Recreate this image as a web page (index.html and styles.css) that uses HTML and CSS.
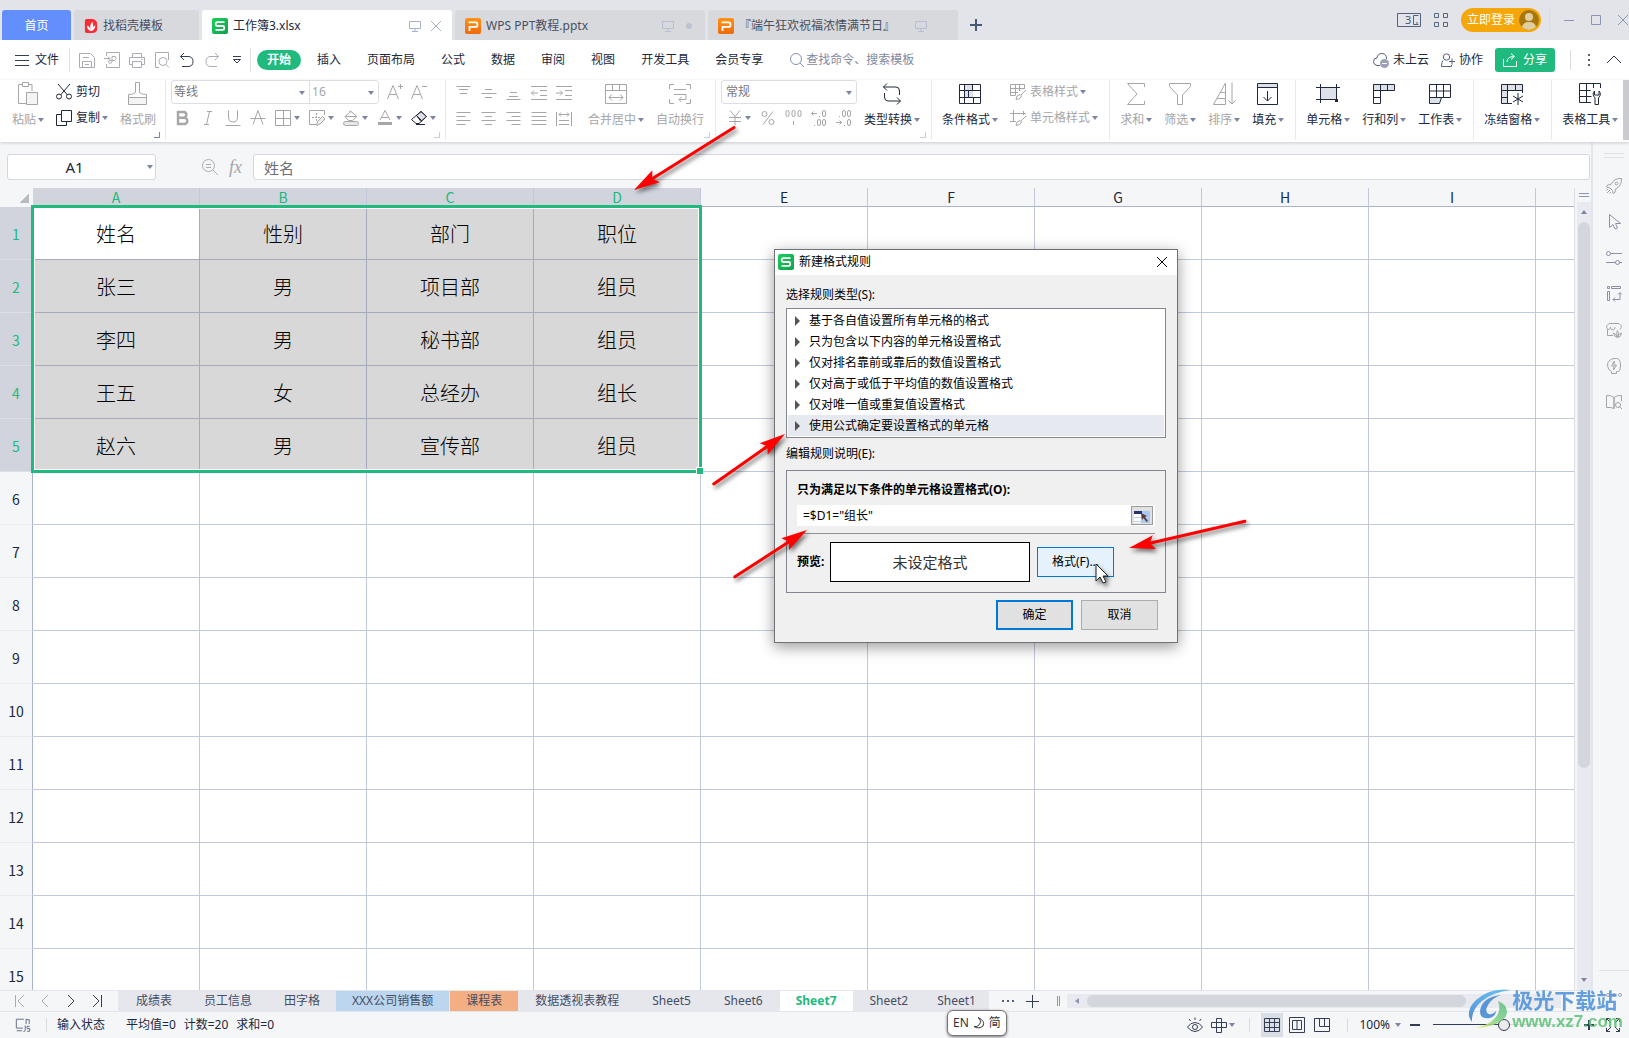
FILE: index.html
```html
<!DOCTYPE html>
<html lang="zh-CN">
<head>
<meta charset="utf-8">
<title>工作簿3.xlsx - WPS 表格</title>
<link rel="stylesheet" href="styles.css">
</head>
<body>
<svg class="defs" aria-hidden="true">
  <defs>
    <linearGradient id="green" x1="0" y1="0" x2="1" y2="1"><stop offset="0" stop-color="#19d05c"/><stop offset="1" stop-color="#12a04c"/></linearGradient>
    <linearGradient id="orange" x1="0" y1="0" x2="0" y2="1"><stop offset="0" stop-color="#ff9318"/><stop offset="1" stop-color="#ee6a0c"/></linearGradient>
    <linearGradient id="swoosh" x1="0" y1="0" x2="0" y2="1"><stop offset="0" stop-color="#4fb3ee"/><stop offset="1" stop-color="#3a77c8"/></linearGradient>
    <linearGradient id="leaf" x1="1" y1="0" x2="0" y2="1"><stop offset="0" stop-color="#55bf7c"/><stop offset=".5" stop-color="#7fd08a"/><stop offset="1" stop-color="#e8ee5a"/></linearGradient>
  </defs>
  <symbol id="i-s" viewBox="0 0 16 16"><rect width="16" height="16" rx="2" fill="url(#green)"/><path d="M12.5 4.2H5.2Q3.8 4.2 3.8 5.6V6.6Q3.8 8 5.2 8H10.8Q12.2 8 12.2 9.4V10.4Q12.2 11.8 10.8 11.8H3.5" fill="none" stroke="#fff" stroke-width="1.8"/></symbol>
  <symbol id="i-p" viewBox="0 0 16 16"><rect width="16" height="16" rx="2" fill="url(#orange)"/><path d="M3.5 4.3H10.8Q12.4 4.3 12.4 5.9V7.2Q12.4 8.9 10.8 8.9H4.5V13" fill="none" stroke="#fff" stroke-width="1.8"/></symbol>
  <symbol id="i-monitor" viewBox="0 0 12 12"><path d="M.5 1.5h11v7H.5zM6 8.500v3M3 11.500h6"/></symbol>
  <symbol id="arrow" overflow="visible"><path d="M0 0L26 -7L22 -1V1L26 7Z" fill="#f00" stroke="none"/></symbol>
</svg>

<div class="app">
  <header class="titlebar">
    <nav class="doc-tabs">
      <button class="doc-tab home">首页</button>
      <button class="doc-tab docer"><svg class="i14" viewBox="0 0 14 16"><path d="M2 0h7q5 1 5 6v5q0 5-6 5H2q-2 0-2-2V2Q0 0 2 0z" fill="#fa2b35"/><path d="M7 14Q2 12 2.500 7.500Q6 9 7 14ZM7 14Q4.500 7 8.500 3Q11 8 7 14ZM7 14Q8 9 12 7Q12 12 7 14Z" fill="#fff"/></svg><span>找稻壳模板</span></button>
      <button class="doc-tab wide active"><svg class="i16"><use href="#i-s"/></svg><span class="grow">工作簿3.xlsx</span><svg class="i12 ln soft"><use href="#i-monitor"/></svg><svg class="i12 ln soft" viewBox="0 0 12 12"><path d="M1 1l10 10M11 1L1 11"/></svg></button>
      <button class="doc-tab wide"><svg class="i16"><use href="#i-p"/></svg><span class="grow">WPS PPT教程.pptx</span><svg class="i12 ln pale"><use href="#i-monitor"/></svg><svg class="i12" viewBox="0 0 12 12"><circle cx="6" cy="6" r="3" fill="#bcc2d4"/></svg></button>
      <button class="doc-tab wide"><svg class="i16"><use href="#i-p"/></svg><span class="grow">『端午狂欢祝福浓情满节日』</span><svg class="i12 ln pale"><use href="#i-monitor"/></svg><svg class="i12"></svg></button>
      <button class="new-tab" aria-label="新建"><svg class="i12" viewBox="0 0 12 12"><path d="M6 0v12M0 6h12" stroke="#4a5878" stroke-width="2"/></svg></button>
    </nav>
    <div class="window-tools">
      <svg class="w24" viewBox="0 0 24 16"><path d="M.5 1.500h23v13H.5zM21.500 3.500h-5v9h5M19 11h2" fill="none" stroke="#56627e"/><text x="8" y="12" font-size="11" fill="#48536e">3</text></svg>
      <svg class="i14 ln slate" viewBox="0 0 14 14"><path d="M.5.5h4v4h-4zM9.500.5h4v4h-4zM.5 9.500h4v4h-4zM9.500 9.500h4v4h-4z"/></svg>
      <button class="login">立即登录<svg class="i20" viewBox="0 0 20 20"><circle cx="10" cy="10" r="10" fill="#a8760b"/><circle cx="10" cy="7" r="4" fill="#e0cda0"/><path d="M3 17q1-5 7-5t7 5q-3 3-7 3t-7-3z" fill="#e0cda0"/></svg></button>
      <i class="vline"></i>
      <svg class="i12 ln win" viewBox="0 0 12 12"><path d="M1 6.500h10"/></svg>
      <svg class="i12 ln win" viewBox="0 0 12 12"><path d="M1.500 1.500h9v9h-9z"/></svg>
      <svg class="i12 ln win" viewBox="0 0 12 12"><path d="M1 1l10 10M11 1L1 11"/></svg>
    </div>
  </header>

  <div class="menubar">
    <button class="file"><svg class="i14 ln dark" viewBox="0 0 14 14"><path d="M0 2.500h14M0 7.500h14M0 12.500h14"/></svg>文件</button>
    <div class="quick">
      <svg class="i16 ln gray" viewBox="0 0 16 16"><path d="M.5 1.500h11l4 4v10H.5zM3.500 15.500v-6h9v6M4 5.500h6M6 12.500h4"/></svg>
      <svg class="i16 ln gray" viewBox="0 0 16 16"><path d="M2.500 4V.5h13v15h-13V12M0 6.500h6M4 4.500l2 2-2 2M8 10V4.500h3.500q1.500 2-.5 4H7q-3 0-2.500 2t3.500 0"/></svg>
      <svg class="i16 ln gray" viewBox="0 0 16 16"><path d="M3.500 5V1.500h9V5M3.500 12.500h-3v-7h15v7h-3M3.500 9.500h9v6h-9zM12 7.500h1.500"/></svg>
      <svg class="i16 ln gray" viewBox="0 0 16 16"><path d="M5 15.500H1.500V.5h13V8M12 12.500l3 3"/><circle cx="9" cy="9.500" r="4"/></svg>
      <svg class="i16 ln dark" viewBox="0 0 16 16"><path d="M5 1L1.500 4.500 5 8M1.500 4.500H9q5 0 5 5t-5 5H3"/></svg>
      <svg class="i16 ln gray" viewBox="0 0 16 16"><path d="M11 1l3.500 3.500L11 8M14.500 4.500H7q-5 0-5 5t5 5h6"/></svg>
      <svg class="i10 ln dark" viewBox="0 0 10 10"><path d="M1 1.500h8M1.500 4.500h7L5 8z"/></svg>
    </div>
    <nav class="menus">
      <button class="menu current">开始</button><button class="menu">插入</button><button class="menu">页面布局</button><button class="menu">公式</button><button class="menu">数据</button><button class="menu">审阅</button><button class="menu">视图</button><button class="menu">开发工具</button><button class="menu">会员专享</button>
    </nav>
    <label class="search"><svg class="i14 ln find" viewBox="0 0 14 14"><circle cx="6" cy="6" r="5.500"/><path d="M10 10l4 4"/></svg><input type="text" placeholder="查找命令、搜索模板" aria-label="查找命令"></label>
    <div class="account">
      <button><svg class="i16 ln slate" viewBox="0 0 16 16"><path d="M7 13.500H4Q.5 13 .5 9.500T4 6q.5-4.500 5-4.500T13.500 7"/><circle cx="11.500" cy="11.500" r="4.500" fill="#9ba2b5" stroke="none"/><path d="M9 11.500h5" stroke="#fff"/></svg>未上云</button>
      <button><svg class="i14 ln slate" viewBox="0 0 14 14"><circle cx="5.500" cy="4" r="3.200"/><path d="M2 7.500Q.5 9 .5 13.500h10V12M8 8.500h6M11 5.500v6"/></svg>协作</button>
      <button class="share"><svg class="i14 ln white" viewBox="0 0 14 14"><path d="M.5 6v7.500h13V8M4 9q0-5.500 7-5.500M8 .5l3.500 3L8 6.500"/></svg>分享</button>
      <i class="vline"></i>
      <svg class="i12" viewBox="0 0 12 12"><path d="M5 0h2v2H5zM5 5h2v2H5zM5 10h2v2H5z" fill="#5a6478"/></svg>
      <svg class="i14 ln dark" viewBox="0 0 14 14"><path d="M0 10l7-7 7 7"/></svg>
    </div>
  </div>

  <div class="ribbon">
    <section class="group corner dark-corner">
      <button class="big off"><svg class="i24 ln" viewBox="0 0 24 24"><path d="M6 2.500H2.500v19H10M16 9V2.500h-4M6.500.5h6v4h-6z"/><path d="M10.500 10.500h11v12h-11z" fill="#f4f4f5"/></svg><span class="dd">粘贴</span></button>
      <div class="stack">
        <button class="small"><svg class="i16 ln" viewBox="0 0 16 16"><path d="M2 0l9.500 11M14 0L4.500 11"/><circle cx="3" cy="12.500" r="2.500"/><circle cx="13" cy="12.500" r="2.500"/></svg>剪切</button>
        <button class="small"><svg class="i16 ln" viewBox="0 0 16 16"><path d="M5.500.5h10v11h-10zM5 4.500H.5v11h10V12"/></svg><span class="dd">复制</span></button>
      </div>
      <button class="big off"><svg class="i24 ln" viewBox="0 0 24 24"><path d="M9.500 10V.5h4V10q0 2 7 2.500v3h-18v-3Q9.500 12 9.500 10z"/><path d="M2.500 15.500h18v7h-18z" fill="#f4f4f5"/></svg><span>格式刷</span></button>
    </section>

    <section class="group font corner">
      <div class="stack">
        <div class="line">
          <span class="pick name"><select aria-label="字体"><option>等线</option></select></span><span class="pick size"><select aria-label="字号"><option>16</option></select></span>
          <svg class="i16 ln off step" viewBox="0 0 16 16"><path d="M.5 15L6 1.500 11.500 15M2.500 10.500h7M11 2.500h5M13.500 0v5"/></svg>
          <svg class="i16 ln off step" viewBox="0 0 16 16"><path d="M.5 15L6 1.500 11.500 15M2.500 10.500h7M11 2.500h5"/></svg>
        </div>
        <div class="line marks off">
          <svg class="i16 ln" viewBox="0 0 16 16"><path d="M3 2h5.500a2.800 2.800 0 010 5.700H3zM3 7.700h6.200a3.100 3.100 0 010 6.300H3z" stroke-width="2.400"/></svg>
          <svg class="i16 ln" viewBox="0 0 16 16"><path d="M7 1.500h5M4 14.500h5M9.500 1.500l-3 13"/></svg>
          <svg class="i16 ln" viewBox="0 0 16 16"><path d="M3.500.5V7q0 5 4.500 5t4.500-5V.5M.5 15.500h15"/></svg>
          <svg class="i16 ln" viewBox="0 0 16 16"><path d="M3 14.500L8 .5l5 14M.5 8.500h15"/></svg>
          <span class="dd"><svg class="i16 ln" viewBox="0 0 16 16"><path d="M.5.5h15v15H.5zM8.500.5v15M.5 8.500h15"/></svg></span>
          <span class="dd"><svg class="i16 ln" viewBox="0 0 16 16"><path d="M7 14.500H.5V.5h15V5"/><path d="M3 7.500h8M7.500 3v8" stroke-dasharray="2 1"/><path d="M7.500 15.500l1-4 5-5 2.500 2.500-5 5z" fill="#eee"/></svg></span>
          <span class="dd"><svg class="i16 ln" viewBox="0 0 16 16"><path d="M2 6.500l6-5 6 5-4.500 4H5.500zM6 1l2 .5M2.500 6.500h11"/><rect x=".5" y="11.500" width="15" height="4" rx="2" fill="#e8e8ea"/></svg></span>
          <span class="dd"><svg class="i16 ln" viewBox="0 0 16 16"><path d="M3 10L8 .5 13 10M4.500 7.500h7"/><path d="M1 13.500h14" stroke-width="3"/></svg></span>
          <span class="dd ink"><svg class="i16 ln" viewBox="0 0 16 16"><path d="M5.500 5.500L10 1.500l5.500 5-5.500 5z" fill="#dfe1e8"/><path d="M10 1.500l5.500 5-7.500 7H5L.5 9.500zM5.500 5.500l5 5M5 14.500h9"/></svg></span>
        </div>
      </div>
    </section>

    <section class="group align corner off">
      <div class="grid5">
        <svg class="i16 ln" viewBox="0 0 16 16"><path d="M.5 1.500h14M3 4.500h9M4 8.500h7"/></svg>
        <svg class="i16 ln" viewBox="0 0 16 16"><path d="M4 4.500h7M.5 8.500h15M4 12.500h7"/></svg>
        <svg class="i16 ln" viewBox="0 0 16 16"><path d="M4 7.500h7M3 11.500h9M.5 14.500h14"/></svg>
        <svg class="i16 ln" viewBox="0 0 16 16"><path d="M0 1.500h16M9 5.500h7M9 10.500h7M0 14.500h16M7 8H.5M3 5.500L.5 8 3 10.500"/></svg>
        <svg class="i16 ln" viewBox="0 0 16 16"><path d="M0 1.500h16M9 5.500h7M9 10.500h7M0 14.500h16M0 8h6.500M4 5.500L6.500 8 4 10.500"/></svg>
        <svg class="i16 ln" viewBox="0 0 16 16"><path d="M.5 1.500h14M.5 5.500h9M.5 9.500h14M.5 13.500h9"/></svg>
        <svg class="i16 ln" viewBox="0 0 16 16"><path d="M.5 1.500h14M4 5.500h7M.5 9.500h14M4 13.500h7"/></svg>
        <svg class="i16 ln" viewBox="0 0 16 16"><path d="M.5 1.500h14M5.500 5.500h9M.5 9.500h14M5.500 13.500h9"/></svg>
        <svg class="i16 ln" viewBox="0 0 16 16"><path d="M.5 1.500h15M.5 5.500h15M.5 9.500h15M.5 13.500h15"/></svg>
        <svg class="i16 ln" viewBox="0 0 16 16"><path d="M.5 1v14M15.500 1v14M3 3.500h10M5 1.500l-2 2 2 2M11 1.500l2 2-2 2M3 9.500h10M3 13.500h10"/></svg>
      </div>
      <button class="big"><svg class="i24 ln" viewBox="0 0 24 24"><path d="M1.500 2.500h21v19h-21zM1.500 8.500h21M8.500 2.500v6M15.500 2.500v6M5 15.500h14M8 12.500l-3 3 3 3M16 12.500l3 3-3 3"/></svg><span class="dd">合并居中</span></button>
      <button class="big"><svg class="i24 ln" viewBox="0 0 24 24"><path d="M6 2.500H1.500V7M18 2.500h4.500V7M6 21.500H1.500V17M18 21.500h4.500V17M6 7.500h12M6 12.500h12v5h-7M13.500 15l-2.500 2.500 2.500 2.500"/></svg><span>自动换行</span></button>
    </section>

    <section class="group number corner">
      <div class="stack off">
        <div class="line"><span class="pick format"><select aria-label="数字格式"><option>常规</option></select></span></div>
        <div class="line formats">
          <span class="dd"><svg class="i16 ln" viewBox="0 0 16 16"><path d="M3 .5l5 6 5-6M8 6.500v9M2 7.500h12M2 11.500h12"/></svg></span>
          <svg class="i16 ln" viewBox="0 0 16 16"><circle cx="4.500" cy="4" r="2.500"/><circle cx="11.500" cy="12" r="2.500"/><path d="M13 1.500l-10 13"/></svg>
          <svg class="i18 ln" viewBox="0 0 18 16"><rect x="1" y=".5" width="3" height="6" rx="1.500"/><rect x="7" y=".5" width="3" height="6" rx="1.500"/><rect x="13" y=".5" width="3" height="6" rx="1.500"/><path d="M8.500 11v4"/></svg>
          <svg class="i16 ln" viewBox="0 0 16 16"><rect x="11.500" y=".5" width="3" height="6" rx="1.500"/><rect x="6.500" y="9.500" width="3" height="6" rx="1.500"/><rect x="11.500" y="9.500" width="3" height="6" rx="1.500"/><path d="M6 3.500H.5M2.500 1.500l-2 2 2 2M8 6.500h1M3 15.500h1"/></svg>
          <svg class="i16 ln" viewBox="0 0 16 16"><rect x="6.500" y=".5" width="3" height="6" rx="1.500"/><rect x="11.500" y=".5" width="3" height="6" rx="1.500"/><rect x="11.500" y="9.500" width="3" height="6" rx="1.500"/><path d="M0 12.500h5.500M3.500 10.500l2 2-2 2M3 6.500h1M8 15.500h1"/></svg>
        </div>
      </div>
      <button class="big"><svg class="i24 ln" viewBox="0 0 24 24"><path d="M7 1.500L3.500 5 7 8.500M3.500 5H16q3.500 0 3.500 4v4M17 15.500l3.500 3.500-3.500 3.500M20.500 19H8q-3.500 0-3.500-4v-4"/></svg><span class="dd">类型转换</span></button>
    </section>

    <section class="group">
      <button class="big"><svg class="i24 ln" viewBox="0 0 24 24"><path d="M7 2.500h8v13H7z" fill="#dfe1e8" stroke="none"/><path d="M1.500 2.500h21v19h-21zM1.500 8.500h21M1.500 15.500h21M6.500 2.500v19M14.500 2.500v6M10.500 8.500v7M15.500 15.500v6"/></svg><span class="dd">条件格式</span></button>
      <div class="stack off">
        <button class="small"><svg class="i16 ln" viewBox="0 0 16 16"><path d="M14.500 5V.5H.5v11H5M.5 4.500h14M.5 8.500H8M5.500.5v11M9.500.5V7"/><path d="M16 6l-5 5M6 15.500q0-4.500 4-5l1.500 1.500q-1 3.500-5.500 3.500z"/></svg><span class="dd">表格样式</span></button>
        <button class="small"><svg class="i16 ln" viewBox="0 0 16 16"><path d="M0 3.500h16M3.500 0v12M0 11.500h6M13.500 1v4"/><path d="M16 6l-5 5M6 15.500q0-4.500 4-5l1.500 1.500q-1 3.500-5.500 3.500z"/></svg><span class="dd">单元格样式</span></button>
      </div>
    </section>

    <section class="group">
      <button class="big off"><svg class="i24 ln" viewBox="0 0 24 24"><path d="M20.500 5V1.500h-17L13 12 3.500 22.500h17V19"/></svg><span class="dd">求和</span></button>
      <button class="big off"><svg class="i24 ln" viewBox="0 0 24 24"><path d="M1.500 1.500h21v3L14.500 13v9.500h-5V13l-8-8.500z"/></svg><span class="dd">筛选</span></button>
      <button class="big off"><svg class="i24 ln" viewBox="0 0 24 24"><path d="M1.500 22.500L13.500 1v21.500zM8 10.500h5.500M5 16.500h8.500M20 .5V22M16.500 18.500L20 22l3.500-3.500"/></svg><span class="dd">排序</span></button>
      <button class="big"><svg class="i24 ln" viewBox="0 0 24 24"><path d="M1.500 1.500h20v4h-20z" fill="#dfe1e8"/><path d="M1.500 5.500h20v17h-20zM11.500 9v10M7.500 15l4 4 4-4"/></svg><span class="dd">填充</span></button>
    </section>

    <section class="group">
      <button class="big"><svg class="i24 ln" viewBox="0 0 24 24"><path d="M4.500 5.500h16v12h-16z" fill="#dfe1e8"/><path d="M0 5.500h24M0 17.500h18M4.500 2v19M20.500 2v12"/><path d="M19 17h3v3h-3z" fill="#20283c" stroke="none"/></svg><span class="dd">单元格</span></button>
      <button class="big"><svg class="i24 ln" viewBox="0 0 24 24"><path d="M1.500 2.500h21v6h-21z" fill="#dfe1e8"/><path d="M8.500 2.500v19h-7V2.500M15.500 2.500v6M1.500 15.500h7"/></svg><span class="dd">行和列</span></button>
      <button class="big"><svg class="i24 ln" viewBox="0 0 24 24"><path d="M1.500 15.500h12l-2 6h-10z" fill="#dfe1e8"/><path d="M1.500 2.500h21v13h-21zM1.500 9h21M8.500 2.500v13M15.500 2.500v13"/></svg><span class="dd">工作表</span></button>
    </section>

    <section class="group">
      <button class="big"><svg class="i24 ln" viewBox="0 0 24 24"><path d="M1.500 2.500h21v6h-21zM1.500 8.500h6v13h-6z" fill="#dfe1e8"/><path d="M1.500 8.500h21V11M7.500 2.500v19H12M15.500 2.500v6M1.500 15.500h6M18 11v12M13 14l10 6M23 14l-10 6"/></svg><span class="dd">冻结窗格</span></button>
    </section>

    <section class="group last">
      <button class="big"><svg class="i24 ln" viewBox="0 0 24 24"><path d="M13 20.500H1.500v-19h21V6M1.500 8.500h11M1.500 14.500h12M8.500 1.500v19M15.500 1.500V6M16.500 9q-3 3 .5 7v6.500h3.500V16q3.500-4 .5-7v4h-4.500z"/></svg><span class="dd">表格工具</span></button>
    </section>
    <button class="more" aria-label="更多"></button>
  </div>

  <main class="workspace">
    <div class="center">
      <div class="formula-bar">
        <label class="name-box"><input type="text" value="A1" aria-label="名称框"></label>
        <svg class="i16 ln gray" viewBox="0 0 16 16"><circle cx="6.500" cy="6.500" r="6"/><path d="M11 11l5 5M4 5.500h5M4 8.500h5"/></svg>
        <span class="fx">fx</span>
        <input class="formula" type="text" value="姓名" aria-label="编辑栏">
      </div>

      <div class="sheet-area">
        <div class="sheet">
          <table>
            <colgroup><col class="c-num"><col span="10" class="c-col"></colgroup>
            <thead><tr><th class="all"></th><th class="sel">A</th><th class="sel">B</th><th class="sel">C</th><th class="sel">D</th><th>E</th><th>F</th><th>G</th><th>H</th><th>I</th><th></th></tr></thead>
            <tbody>
              <tr class="data"><th>1</th><td class="cur">姓名</td><td>性别</td><td>部门</td><td>职位</td><td></td><td></td><td></td><td></td><td></td><td></td></tr>
              <tr class="data"><th>2</th><td>张三</td><td>男</td><td>项目部</td><td>组员</td><td></td><td></td><td></td><td></td><td></td><td></td></tr>
              <tr class="data"><th>3</th><td>李四</td><td>男</td><td>秘书部</td><td>组员</td><td></td><td></td><td></td><td></td><td></td><td></td></tr>
              <tr class="data"><th>4</th><td>王五</td><td>女</td><td>总经办</td><td>组长</td><td></td><td></td><td></td><td></td><td></td><td></td></tr>
              <tr class="data"><th>5</th><td>赵六</td><td>男</td><td>宣传部</td><td>组员</td><td></td><td></td><td></td><td></td><td></td><td></td></tr>
              <tr><th>6</th><td></td><td></td><td></td><td></td><td></td><td></td><td></td><td></td><td></td><td></td></tr>
              <tr><th>7</th><td></td><td></td><td></td><td></td><td></td><td></td><td></td><td></td><td></td><td></td></tr>
              <tr><th>8</th><td></td><td></td><td></td><td></td><td></td><td></td><td></td><td></td><td></td><td></td></tr>
              <tr><th>9</th><td></td><td></td><td></td><td></td><td></td><td></td><td></td><td></td><td></td><td></td></tr>
              <tr><th>10</th><td></td><td></td><td></td><td></td><td></td><td></td><td></td><td></td><td></td><td></td></tr>
              <tr><th>11</th><td></td><td></td><td></td><td></td><td></td><td></td><td></td><td></td><td></td><td></td></tr>
              <tr><th>12</th><td></td><td></td><td></td><td></td><td></td><td></td><td></td><td></td><td></td><td></td></tr>
              <tr><th>13</th><td></td><td></td><td></td><td></td><td></td><td></td><td></td><td></td><td></td><td></td></tr>
              <tr><th>14</th><td></td><td></td><td></td><td></td><td></td><td></td><td></td><td></td><td></td><td></td></tr>
              <tr><th>15</th><td></td><td></td><td></td><td></td><td></td><td></td><td></td><td></td><td></td><td></td></tr>
            </tbody>
          </table>
          <div class="selection"></div>
        </div>
        <div class="vscroll">
          <i class="split"></i>
          <div class="track"><i class="tri up"></i><i class="thumb"></i><i class="spacer"></i><i class="tri down"></i></div>
        </div>
      </div>

      <div class="sheet-tabs">
        <div class="tab-nav">
          <svg class="i14 ln gray" viewBox="0 0 14 14"><path d="M3.500 1v12M12 1L6 7l6 6"/></svg>
          <svg class="i14 ln gray" viewBox="0 0 14 14"><path d="M10 1L4 7l6 6"/></svg>
          <svg class="i14 ln dark" viewBox="0 0 14 14"><path d="M4 1l6 6-6 6"/></svg>
          <svg class="i14 ln dark" viewBox="0 0 14 14"><path d="M3 1l6 6-6 6M11.500 1v12"/></svg>
        </div>
        <nav class="tabs">
          <button>成绩表</button><button>员工信息</button><button>田字格</button><button class="blue">XXX公司销售额</button><button class="peach">课程表</button><button>数据透视表教程</button><button>Sheet5</button><button>Sheet6</button><button class="on">Sheet7</button><button>Sheet2</button><button class="cut">Sheet1</button>
        </nav>
        <svg class="i14 dots" viewBox="0 0 14 14"><path d="M1 6h2v2H1zM6 6h2v2H6zM11 6h2v2h-2z" fill="#56627e"/></svg>
        <svg class="i14 ln dark" viewBox="0 0 14 14"><path d="M7.500 1v13M1 7.500h13"/></svg>
        <svg class="i14 ln win grip" viewBox="0 0 14 14"><path d="M8.500 2v10M10.500 2v10"/></svg>
        <div class="hscroll"><i class="tri left"></i><i class="hthumb"></i></div>
      </div>
    </div>

    <aside class="side">
      <i class="handle"></i>
      <svg class="i16 ln" viewBox="0 0 16 16"><path d="M15.500.5Q8 0 5 6.500L1.500 7 .5 9 4 10l2.500 2.500.5 3 2-1 .5-3.500Q16 8 15.500.5zM4 12l-3 3M2 11L.5 12.500M5 14l-1.500 1.500"/><circle cx="10.500" cy="5.500" r="1.500"/></svg>
      <svg class="i16 ln blue-line" viewBox="0 0 16 16"><path d="M3.500.5v13L7 10.500l2 4.500 2.500-1-2-4.500H14.500z"/></svg>
      <svg class="i16 ln blue-line" viewBox="0 0 16 16"><circle cx="2.500" cy="3.500" r="2"/><circle cx="11.500" cy="12.500" r="2"/><path d="M4.500 3.500H16M0 12.500h9.500M13.500 12.500H16"/></svg>
      <svg class="i16 ln blue-line" viewBox="0 0 16 16"><path d="M1.500.5h2v2h-2zM5.500.5h9v2h-9zM1.500 5.500h2v9h-2zM14 7v6.500H7M12 8.500l2-2 2 2M9 11.500l-2 2 2 2"/></svg>
      <svg class="i16 ln" viewBox="0 0 16 16"><path d="M1.500 7.500v6H7M1.500 7.500Q0 6 1 3.500L3 1.500h10l2 2Q16 6 14 7.500M4.500 5v1q-1 2-3 1.500M4.500 6q1 2 2.500 2t2-2V5"/><path d="M11.500 15.500q-4-1-4-4.500 2 .5 4 4.500zM11.500 15.500q-2-4 0-7 2 3 0 7zM11.500 15.500q0-3.500 4-4.500 0 4-4 4.500z"/></svg>
      <svg class="i16 ln" viewBox="0 0 16 16"><path d="M5.500 15.500v-2Q1.500 12 1.500 7T8 .5 14.500 7t-4 6.500v2zM8.500 3L5.500 8H8l-.5 4 3-5H8z"/></svg>
      <svg class="i16 ln" viewBox="0 0 16 16"><path d="M8 3.500Q5 1 .5 1.500v12q4.500-.5 7.500 1zM8 3.500Q11 1 15.500 1.500V7M8 14.500v-11"/><circle cx="12" cy="11" r="2.500"/><path d="M14 13l2 2"/></svg>
      <div class="side-foot"><svg class="i16 ln" viewBox="0 0 16 16"><circle cx="2" cy="8" r="1.500"/><circle cx="8" cy="8" r="1.500"/><circle cx="14" cy="8" r="1.500"/></svg></div>
    </aside>
  </main>

  <footer class="status">
    <svg class="i18 ln slate" viewBox="0 0 18 18"><path d="M10 2.500H1.500v10H9M2 15.500h6M12.500 8V2M12.500 3h3.500v5M11.500 9.500v5q0 2-2 2M16.500 10.500h-3v2.500h3v3h-3"/></svg>
    <i class="vline"></i>
    <span class="state">输入状态</span><span>平均值=0</span><span>计数=20</span><span>求和=0</span>
    <div class="view">
      <svg class="i16 ln dark" viewBox="0 0 16 16"><path d="M.5 10q3-4.500 7.500-4.500t7.500 4.500q-3 4.500-7.500 4.500T.5 10zM8 3V.5M3.500 4L2 2M12.500 4L14 2"/><circle cx="8" cy="10" r="2.500"/></svg>
      <span class="dd"><svg class="i16 ln dark" viewBox="0 0 16 16"><path d="M5.500 1.500h5v14h-5zM.5 5.500h15v5H.5z"/></svg></span>
      <i class="vline"></i>
      <button class="mode on" aria-label="普通视图"><svg class="i16 ln dark" viewBox="0 0 16 16"><path d="M.5 1.500h15v13H.5zM.5 5.500h15M.5 10.500h15M5.500 1.500v13M10.500 1.500v13"/></svg></button>
      <button class="mode" aria-label="分页预览"><svg class="i16 ln dark" viewBox="0 0 16 16"><path d="M.5.5h15v15H.5zM3.500 3.500h9v9h-9zM8 3.500v9"/></svg></button>
      <button class="mode" aria-label="页面布局"><svg class="i16 ln dark" viewBox="0 0 16 16"><path d="M.5 1.500h15v13H.5zM5.500 1.500v8h5v-8M10.500 9.500h5"/></svg></button>
      <i class="vline"></i>
      <span class="dd zoom-value">100%</span>
      <svg class="i12" viewBox="0 0 12 12"><path d="M1 6h10" stroke="#343d58" stroke-width="2"/></svg>
      <input class="zoom" type="range" min="0" max="100" value="50" aria-label="显示比例">
      <svg class="i12 plus" viewBox="0 0 12 12"><path d="M1 6h10M6 1v10" stroke="#343d58" stroke-width="2"/></svg>
      <svg class="i14 ln dark" viewBox="0 0 14 14"><path d="M.5 4V.5H4M.5.5L5 5M10 .5h3.500V4M13.500.5L9 5M.5 10v3.500H4M.5 13.500L5 9M13.500 10v3.500H10M13.500 13.500L9 9"/></svg>
    </div>
  </footer>
</div>

<div class="dialog" role="dialog" aria-labelledby="dlg-title">
  <div class="dlg-head"><svg class="i16"><use href="#i-s"/></svg><span id="dlg-title">新建格式规则</span><button aria-label="关闭"><svg class="i12 ln" viewBox="0 0 12 12"><path d="M1 1l10 10M11 1L1 11"/></svg></button></div>
  <div class="dlg-body">
    <p id="type-label">选择规则类型(S):</p>
    <ul class="rules" role="listbox" aria-labelledby="type-label">
      <li role="option">基于各自值设置所有单元格的格式</li>
      <li role="option">只为包含以下内容的单元格设置格式</li>
      <li role="option">仅对排名靠前或靠后的数值设置格式</li>
      <li role="option">仅对高于或低于平均值的数值设置格式</li>
      <li role="option">仅对唯一值或重复值设置格式</li>
      <li role="option" aria-selected="true">使用公式确定要设置格式的单元格</li>
    </ul>
    <p class="edit-label">编辑规则说明(E):</p>
    <div class="editor">
      <label for="formula">只为满足以下条件的单元格设置格式(O):</label>
      <div class="formula-row"><input id="formula" type="text" value="=$D1=&quot;组长&quot;"><button aria-label="选择区域"><svg class="i16" viewBox="0 0 16 14"><path d="M0 2h16v12H0z" fill="#fff"/><path d="M0 2h8v3H0z" fill="#27346e"/><path d="M8 2h8v12H8z" fill="#a9c9f5"/><path d="M0 8.500h16M0 12.500h16M7.500 5v9" stroke="#b9cdec"/><path d="M7 4l6 3-2 1 3 4-1.500 1-3-4L8 11z" fill="#5b3b36"/></svg></button></div>
      <hr>
      <div class="preview-row"><b>预览:</b><output>未设定格式</output><button class="btn hot">格式(F)...</button></div>
    </div>
    <div class="actions"><button class="btn primary">确定</button><button class="btn">取消</button></div>
  </div>
</div>

<div class="ime">EN<svg class="i12 ln" viewBox="0 0 12 12"><path d="M5 .5Q9 3.500 6.500 7.500 4 10.500 1 9.500q5 3 9-.5Q12.500 4 5 .5z"/></svg>简</div>

<div class="watermark">
  <svg viewBox="0 0 44 42"><path d="M43 2Q22-1 8 12-4 24 4 34 3 22 14 13 25 4 43 2z" fill="url(#swoosh)"/><path d="M33 7Q14 9 12 23q0 9 10 7 6-2 6-7-3 4-7 3-5-2-1-9 4-7 13-10z" fill="#3f86d2"/><path d="M30 13q9 3 9 12Q36 38 8 40 20 37 26 31q8-8 4-18z" fill="url(#leaf)"/></svg>
  <div><strong>极光下载站</strong><span>www.xz7.com</span></div>
</div>

<svg class="arrows" aria-hidden="true">
  <g stroke="#f00" stroke-width="3" stroke-linecap="round">
    <g transform="translate(634 190) rotate(-32)"><path d="M20 0H118"/><use href="#arrow"/></g>
    <g transform="translate(785 434) rotate(145)"><path d="M20 0H87"/><use href="#arrow"/></g>
    <g transform="translate(807 530) rotate(147)"><path d="M20 0H86"/><use href="#arrow"/></g>
    <g transform="translate(1129 548) rotate(-13)"><path d="M20 0H119"/><use href="#arrow"/></g>
  </g>
  <path d="M1096 564v17l4-4 3 6 3-1-3-6h5z" fill="#fff" stroke="#222" stroke-width="1"/>
</svg>
</body>
</html>
```
FILE: styles.css
```css
* { box-sizing: border-box; }
body {
  margin: 0;
  font: 12px/20px "Noto Sans", "Noto Sans CJK SC", sans-serif;
  color: #20283c;
  overflow: hidden;
}
button, input, select {
  font: inherit;
  color: inherit;
  background: none;
  border: 0;
  padding: 0;
  margin: 0;
  border-radius: 0;
  outline: 0;
}
button { white-space: nowrap; }
i { display: block; flex: none; }
svg { flex: none; display: block; }
p { margin: 0; }
.defs { position: absolute; width: 0; height: 0; }

/* icon sizes and line colours */
.i10 { width: 10px; height: 10px; }
.i12 { width: 12px; height: 12px; }
.i14 { width: 14px; height: 14px; }
.i16 { width: 16px; height: 16px; }
.i18 { width: 18px; height: 16px; }
.i20 { width: 20px; height: 20px; }
.i24 { width: 24px; height: 24px; }
.w24 { width: 24px; height: 16px; }
.ln { fill: none; stroke: currentColor; }
.dark { color: #343d55; }
.slate { color: #56627e; }
.gray { color: #a9acb3; }
.soft { color: #a7b0c8; }
.pale { color: #b9bfd2; }
.win { color: #8b96b4; }
.find { color: #8590ac; }
.white { color: #fff; }
.off { color: #a6a6a8; }
.ink { color: #20283c; }
.vline { width: 1px; height: 20px; background: #d9dbe1; }
.dd { display: inline-flex; align-items: center; gap: 2px; }
.dd::after {
  content: "";
  border: 3px solid transparent;
  border-top: 4px solid #7c86a3;
  border-bottom: 0;
}

.app { height: 100vh; display: flex; flex-direction: column; background: #f5f6f8; }

/* title bar */
.titlebar { display: flex; justify-content: space-between; height: 40px; background: #e3e4e9; flex: none; }
.doc-tabs { display: flex; gap: 3px; padding: 10px 0 0 2px; }
.doc-tab {
  display: flex;
  align-items: center;
  gap: 5px;
  padding: 1px 10px 0;
  background: #d8d9dd;
  border-radius: 3px 3px 0 0;
  color: #474f63;
}
.doc-tab .grow { flex: 1; text-align: left; }
.home { width: 69px; justify-content: center; background: #638ffc; color: #fff; }
.docer { width: 125px; }
.wide { width: 250px; gap: 5px; }
.wide .i12 + .i12 { margin-left: 4px; }
.doc-tab.active { background: #fff; color: #20283c; }
.new-tab { margin-left: 9px; }
.window-tools { display: flex; align-items: center; gap: 13px; height: 40px; }
.login {
  display: flex;
  align-items: center;
  gap: 4px;
  height: 24px;
  padding: 0 2px 0 6px;
  border-radius: 12px;
  background: #f5a70a;
  color: #fff;
}
.window-tools .vline { margin-left: -5px; }
.window-tools .win { margin: 0 2px 0 0; }
.window-tools .win:last-child { margin: 0; }

/* menu bar */
.menubar { display: flex; align-items: center; height: 40px; background: #fff; flex: none; padding-left: 15px; }
.file { display: flex; align-items: center; gap: 6px; padding-right: 10px; border-right: 1px solid #dfe1e6; height: 24px; }
.quick { display: flex; align-items: center; gap: 9px; padding: 0 4px 0 9px; border-right: 1px solid #dfe1e6; height: 24px; }
.quick .i10 { margin: 0 4px 0 3px; }
.menus { display: flex; gap: 26px; padding-left: 6px; }
.menu.current { background: #20ba7e; color: #fff; font-weight: 700; border-radius: 10px; padding: 0 10px; margin-right: -10px; }
.search { display: flex; align-items: center; gap: 2px; margin-left: 27px; color: #7f89a3; }
.search input { width: 130px; }
.search input::placeholder { color: #7f89a3; opacity: 1; }
.account { display: flex; align-items: center; gap: 12px; margin-left: auto; padding-right: 8px; }
.account button { display: flex; align-items: center; gap: 4px; }
.account .share { background: #20ba7e; color: #fff; border-radius: 3px; height: 24px; padding: 0 8px; gap: 6px; }
.account .vline { margin-left: 3px; }

/* ribbon */
.ribbon {
  position: relative;
  display: flex;
  height: 62px;
  background: #fff;
  box-shadow: 0 1px 3px #c8cad0;
  flex: none;
  z-index: 1;
}
.group {
  position: relative;
  display: flex;
  gap: 12px;
  height: 60px;
  padding: 0 9px 0 12px;
  border-right: 1px solid #e9eaee;
  flex: none;
}
.group ~ .group { padding: 0 11px 0 10px; }
.group.font { padding: 0 9px 0 5px; }
.group.align { padding: 0 11px 0 10px; }
.group.number { padding: 0 11px 0 5px; gap: 7px; }
.group.last { border: 0; }
.corner::after {
  content: "";
  position: absolute;
  right: 5px;
  bottom: 2px;
  width: 5px;
  height: 5px;
  border: solid #c9cedb;
  border-width: 0 1px 1px 0;
}
.dark-corner::after { border-color: #7c86a3; }
.big { display: flex; flex-direction: column; align-items: center; gap: 4px; height: 52px; padding-top: 2px; }
.big > span { height: 20px; }
.stack { display: flex; flex-direction: column; gap: 2px; }
.small, .line { display: flex; align-items: center; gap: 4px; height: 24px; }
.pick { position: relative; height: 24px; border: 1px solid #dcdee3; border-radius: 3px; }
.pick::after {
  content: "";
  position: absolute;
  right: 4px;
  top: 10px;
  border: 3px solid transparent;
  border-top: 4px solid #7c86a3;
  border-bottom: 0;
}
.pick select { width: 100%; height: 22px; padding: 0 2px; appearance: none; color: #77787c; }
.pick.name { width: 139px; border-radius: 3px 0 0 3px; }
.pick.size { width: 70px; border-radius: 0 3px 3px 0; margin-left: -5px; }
.pick.size select { color: #a6a6a8; }
.pick.format { width: 136px; }
.pick.format select { padding: 0 4px; }
.step { margin: 0 0 0 4px; }
.marks { gap: 9px; padding-left: 4px; }
.marks .dd { gap: 3px; }
.grid5 { display: grid; grid-template-columns: repeat(5, 16px); column-gap: 9px; row-gap: 10px; align-content: start; padding: 5px 4px 0 0; }
.formats { gap: 8px; padding-left: 6px; justify-content: space-between; padding-right: 5px; }
.more { position: absolute; right: 0; top: 0; width: 6px; height: 60px; background: #c9cbd1; }

/* workspace */
.workspace { flex: 1; min-height: 0; display: flex; }
.center { flex: 1; min-width: 0; display: flex; flex-direction: column; border-right: 2px solid #e3e5ec; }
.formula-bar { display: flex; align-items: center; gap: 11px; height: 46px; flex: none; padding: 4px 1px 0 7px; }
.name-box { position: relative; width: 149px; margin-right: 35px; }
.name-box::after {
  content: "";
  position: absolute;
  right: 3px;
  top: 11px;
  border: 3px solid transparent;
  border-top: 4px solid #7c86a3;
  border-bottom: 0;
}
.name-box input, .formula { height: 26px; border: 1px solid #d5d7dd; border-radius: 3px; background: #fff; font-size: 15px; }
.name-box input { width: 100%; text-align: center; padding-right: 14px; font-size: 15px; }
.formula { flex: 1; padding: 0 10px; color: #6e7075; }
.fx { font: italic 18px/20px "Liberation Serif", serif; color: #a2a5ac; }
.sheet-area { flex: 1; min-height: 0; display: flex; }
.sheet { position: relative; flex: 1; overflow: hidden; border-right: 1px solid #dcdee6; }
table { table-layout: fixed; width: 1703px; border-collapse: separate; border-spacing: 0; }
.c-num { width: 33px; }
.c-col { width: 167px; }
th, td { padding: 0; text-align: center; border: solid #c2c8dc; border-width: 0 1px 1px 0; overflow: hidden; }
th { font: 14px/18px "Noto Sans CJK SC", sans-serif; background: #f5f6f8; }
thead th { height: 19px; border-bottom-color: #a9b3cf; }
thead .all { border-color: #f5f6f8; background: linear-gradient(135deg, #f5f6f8 50%, #b9bbbf 50%) 19px 5px / 10px 10px no-repeat #f5f6f8; }
thead .sel { background: #d1d4dd; color: #20ba7e; }
tbody td { height: 53px; padding-top: 2px; background: #fff; font: 300 20px/28px "Noto Sans CJK SC", sans-serif; color: #000; }
tbody th { padding-top: 2px; border-bottom-color: #e8eaf0; border-right-color: #a9b3cf; }
.data th { background: #d1d4dd; color: #20ba7e; border-bottom-color: #dcdfe8; }
.data td:nth-child(-n+5) { background: #d8d8d8; border-color: #a5abbd; }
.data td.cur { background: #fff; }
.selection { position: absolute; left: 31px; top: 17px; width: 671px; height: 268px; border: 3px solid #20ba7e; box-shadow: inset 0 0 0 1px #fff; }
.selection::after { content: ""; position: absolute; right: -4px; bottom: -4px; width: 6px; height: 6px; background: #20ba7e; border: solid #fff; border-width: 1px 0 0 1px; }
.vscroll { display: flex; flex-direction: column; width: 16px; padding: 5px 0 0 2px; }
.split { width: 10px; height: 4px; margin: 0 0 5px 2px; border: solid #8b96b4; border-width: 1px 0; }
.track { flex: 1; display: flex; flex-direction: column; align-items: center; background: #e9eaef; }
.tri { border: 3px solid transparent; }
.up { border-bottom: 4px solid #7c86a3; border-top: 0; margin: 8px 0; }
.down { border-top: 4px solid #7c86a3; border-bottom: 0; margin: 8px 0; }
.left { border-right: 4px solid #8b96b4; border-left: 0; }
.thumb { width: 12px; flex: 73; border-radius: 6px; background: #d4d6dd; }
.spacer { flex: 27; }

/* sheet tabs */
.sheet-tabs { display: flex; align-items: center; height: 22px; flex: none; border: solid #e3e5ec; border-width: 1px 0; }
.tab-nav { display: flex; gap: 12px; padding: 0 14px 0 12px; }
.tabs { display: flex; height: 20px; background: #e6e7ed; padding-left: 2px; }
.tabs button { padding: 0 16px; color: #454d63; }
.tabs .blue, .tabs .blue ~ button { margin-right: 1px; }
.tabs .blue { background: #bbd6ee; }
.tabs .peach { background: #f4ae83; }
.tabs .on { background: #fff; color: #20ba7e; font-weight: 700; }
.tabs .cut { padding: 0 12px; }
.dots { margin: 0 10px 0 12px; }
.grip { margin: 0 4px 0 10px; }
.hscroll { flex: 1; display: flex; align-items: center; gap: 8px; height: 14px; margin-right: 30px; padding-left: 8px; background: #e9eaef; }
.hthumb { flex: 0 1 379px; height: 12px; border-radius: 6px; background: #d4d6dd; }

/* side bar */
.side { display: flex; flex-direction: column; align-items: center; gap: 20px; width: 36px; padding: 11px 0 0 6px; color: #a2a4aa; }
.handle { width: 20px; height: 5px; border: solid #dfe1e6; border-width: 1px 0; }
.blue-line { color: #8791a8; }
.side-foot { margin-top: auto; align-self: stretch; border-top: 1px solid #dfe1e6; height: 42px; padding: 16px 0 0 7px; }

/* status bar */
.status { display: flex; align-items: center; height: 26px; flex: none; padding: 0 9px 0 14px; white-space: nowrap; }
.status > .vline { margin: 0 10px 0 14px; height: 14px; }
.status > span { margin-right: 8px; }
.status > .state { margin-right: 21px; }
.view { display: flex; align-items: center; gap: 8px; margin-left: auto; height: 26px; }
.view .vline { margin: 0 3px 0 6px; height: 14px; }
.mode { display: flex; align-items: center; justify-content: center; width: 22px; height: 24px; }
.mode + .mode { margin-left: -5px; }
.mode.on { background: #d9dde6; }
.zoom-value { gap: 5px; }
.zoom { width: 142px; height: 12px; margin-left: 4px; appearance: none; background: linear-gradient(90deg, #343d58 50%, #d5d8e2 50%) 0 5px / 100% 1px no-repeat; }
.zoom::-webkit-slider-thumb { appearance: none; width: 12px; height: 12px; border: 1px solid #343d58; border-radius: 50%; background: #ececee; }
.plus { margin-right: 3px; }

/* format rule dialog */
.dialog { position: absolute; left: 774px; top: 249px; width: 404px; z-index: 2; background: #f0f0f0; border: 1px solid #6f7277; box-shadow: 0 4px 14px #0006; color: #000; }
.dlg-head { display: flex; align-items: center; gap: 5px; height: 25px; padding: 0 9px 1px 3px; background: #fff; }
.dlg-head button { margin-left: auto; }
.dlg-body { padding: 10px 11px 12px; }
.rules { list-style: none; margin: 3px 0 0; padding: 1px; background: #fff; border: 1px solid #82868f; height: 130px; }
.rules li { display: flex; align-items: center; gap: 9px; height: 21px; padding-left: 7px; }
.rules li::before { content: ""; border: 5px solid transparent; border-left: 5px solid #555; border-right: 0; }
.rules li[aria-selected] { background: #e6e9ef; }
.edit-label { padding-top: 6px; }
.editor { margin-top: 6px; padding: 9px 10px 10px; border: 1px solid #82868f; height: 123px; }
.editor label, .editor b { display: block; font-weight: 700; }
.formula-row { display: flex; align-items: center; height: 21px; margin-top: 5px; padding: 0 2px 0 6px; background: #fff; }
.formula-row input { flex: 1; min-width: 0; }
.formula-row button { width: 22px; height: 19px; padding: 0 2px; border: 1px solid #9c9c9c; background: #e1e1e1; display: flex; align-items: center; }
hr { margin: 7px 0 8px; border: 0; border-top: 1px solid #8f9196; }
.preview-row { display: flex; align-items: center; }
.preview-row output { width: 200px; height: 40px; margin: 0 7px 0 auto; border: 1px solid #000; background: #fff; font-size: 15px; line-height: 38px; text-align: center; color: #333; }
.btn { width: 77px; height: 30px; border: 1px solid #adadad; background: #e1e1e1; }
.hot { border-color: #0078d7; background: #e5f1fb; margin-right: 41px; }
.primary { border: 2px solid #0078d7; }
.actions { display: flex; justify-content: flex-end; gap: 8px; padding: 7px 8px 0 0; }

/* floating overlays */
.ime { position: absolute; left: 947px; bottom: 2px; z-index: 3; display: flex; align-items: center; gap: 4px; height: 26px; padding: 0 5px; border: 1px solid #777; border-radius: 6px; background: #fff; box-shadow: 0 1px 3px #0008; color: #333; }
.watermark { position: absolute; right: 6px; bottom: 6px; z-index: 4; display: flex; align-items: center; opacity: .85; pointer-events: none; }
.watermark svg { width: 44px; height: 42px; }
.watermark div { display: flex; flex-direction: column; }
.watermark strong { font: 700 21px/26px "Noto Sans CJK SC", sans-serif; color: #4a90d9; }
.watermark span { font: 700 17px/20px "Liberation Sans", sans-serif; color: #5cc274; }
.arrows { position: absolute; left: 0; top: 0; width: 100%; height: 100%; z-index: 5; pointer-events: none; filter: drop-shadow(2px 3px 2px #0008); }
```
